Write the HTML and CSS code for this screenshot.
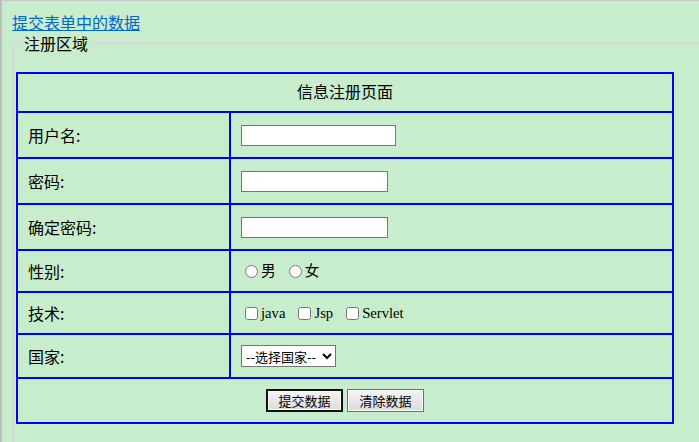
FILE: index.html
```html
<!DOCTYPE html>
<html lang="zh-CN">
<head>
<meta charset="utf-8">
<title>信息注册页面</title>
<link rel="stylesheet" href="styles.css">
</head>
<body>
<div class="frame">
  <a class="top-link" href="#">提交表单中的数据</a>
  <form class="reg-form">
    <fieldset class="reg-fieldset">
      <legend class="reg-legend">注册区域</legend>
      <table class="reg-table">
        <colgroup>
          <col class="col-label">
          <col class="col-field">
        </colgroup>
        <tr class="row-head">
          <td class="head-cell" colspan="2">信息注册页面</td>
        </tr>
        <tr class="row-tall">
          <td class="label-cell">用户名:</td>
          <td class="field-cell"><input class="text-input wide" type="text"></td>
        </tr>
        <tr class="row-tall">
          <td class="label-cell">密码:</td>
          <td class="field-cell"><input class="text-input narrow" type="password"></td>
        </tr>
        <tr class="row-tall">
          <td class="label-cell">确定密码:</td>
          <td class="field-cell"><input class="text-input narrow" type="password"></td>
        </tr>
        <tr class="row-gender">
          <td class="label-cell">性别:</td>
          <td class="field-cell">
            <div class="opts">
              <label class="opt"><input class="opt-input" type="radio" name="sex">男</label>
              <label class="opt"><input class="opt-input" type="radio" name="sex">女</label>
            </div>
          </td>
        </tr>
        <tr class="row-tech">
          <td class="label-cell">技术:</td>
          <td class="field-cell">
            <div class="opts">
              <label class="opt"><input class="opt-input" type="checkbox">java</label>
              <label class="opt"><input class="opt-input" type="checkbox">Jsp</label>
              <label class="opt"><input class="opt-input" type="checkbox">Servlet</label>
            </div>
          </td>
        </tr>
        <tr class="row-country">
          <td class="label-cell">国家:</td>
          <td class="field-cell">
            <select class="country-select">
              <option>--选择国家--</option>
              <option>中国</option>
              <option>美国</option>
              <option>日本</option>
            </select>
          </td>
        </tr>
        <tr class="row-buttons">
          <td class="button-cell" colspan="2">
            <div class="buttons">
              <button class="btn btn-default" type="submit">提交数据</button>
              <button class="btn" type="reset">清除数据</button>
            </div>
          </td>
        </tr>
      </table>
    </fieldset>
  </form>
</div>
</body>
</html>
```
FILE: styles.css
```css
html, body {
  margin: 0;
  padding: 0;
  background: #c7edcc;
  overflow: hidden;
}

body {
  font-family: "Liberation Serif", "Noto Sans CJK SC", serif;
  font-size: 16px;
  line-height: 20px;
  color: #000;
}

.frame {
  width: 760px;
  min-height: 442px;
  box-sizing: border-box;
  border-left: 2px solid #bdbdbd;
  border-top: 1px solid #cacaca;
  padding: 12px 0 0 10px;
}

.top-link {
  display: block;
  width: max-content;
  color: #0066cc;
  text-decoration: underline;
  font-family: "Noto Sans CJK SC", sans-serif;
  font-size: 16px;
  line-height: 19px;
  margin-bottom: 1px;
}

.reg-form {
  margin: 0;
}

.reg-fieldset {
  margin: 0;
  padding: 0 2px 20px 2px;
  border: 2px solid #d9d9d9;
  min-width: 0;
}

.reg-legend {
  margin-left: 6px;
  padding: 0 2px;
  font-family: "Noto Sans CJK SC", sans-serif;
  font-size: 16px;
  line-height: 20px;
}

.reg-table {
  margin-top: 19px;
  width: 658px;
  table-layout: fixed;
  border-collapse: separate;
  border-spacing: 0;
  border: 1px solid #0000ff;
}

.col-label {
  width: 213px;
}

.col-field {
  width: 443px;
}

.reg-table td {
  border: 1px solid #0000ff;
  padding: 0 10px;
  vertical-align: middle;
  font-family: "Noto Sans CJK SC", sans-serif;
  font-size: 16px;
  line-height: 20px;
}

.row-head { height: 39px; }
.row-tall { height: 46px; }
.row-gender { height: 42px; }
.row-tech { height: 42px; }
.row-country { height: 44px; }
.row-buttons { height: 45px; }

.reg-table .head-cell {
  text-align: center;
  padding-bottom: 3px;
}

.text-input {
  box-sizing: border-box;
  height: 21px;
  margin: 0;
  padding: 1px 2px;
  border: 1px solid #767676;
  background: #fff;
  font-size: 13px;
  vertical-align: middle;
  display: block;
}

.text-input.wide { width: 155px; }
.text-input.narrow { width: 147px; }

.opts {
  display: flex;
  align-items: center;
  gap: 9px;
}

.opt {
  display: inline-flex;
  align-items: center;
  font-family: "Liberation Serif", "Noto Sans CJK SC", serif;
  font-size: 14.67px;
  line-height: 18px;
}

.opt-input {
  width: 13px;
  height: 13px;
  margin: 0 3px 0 4px;
}

.country-select {
  display: block;
  box-sizing: border-box;
  width: 95px;
  height: 22px;
  margin: 0;
  border: 1px solid #767676;
  border-radius: 0;
  background: #fff;
  font-family: "Noto Sans CJK SC", sans-serif;
  font-size: 13px;
  color: #000;
}

.button-cell {
  text-align: center;
}

.buttons {
  display: flex;
  justify-content: center;
  gap: 4px;
}

.btn {
  box-sizing: border-box;
  width: 77px;
  height: 23px;
  margin: 0;
  padding: 0;
  border: 1px solid #707070;
  box-shadow: inset 0 0 0 1px #fbfbfb;
  background: linear-gradient(#f4f4f4, #dcdcdc);
  font-family: "Noto Sans CJK SC", sans-serif;
  font-size: 13px;
  line-height: 19px;
  color: #000;
}

.btn-default {
  border: 2px solid #111;
}
```
